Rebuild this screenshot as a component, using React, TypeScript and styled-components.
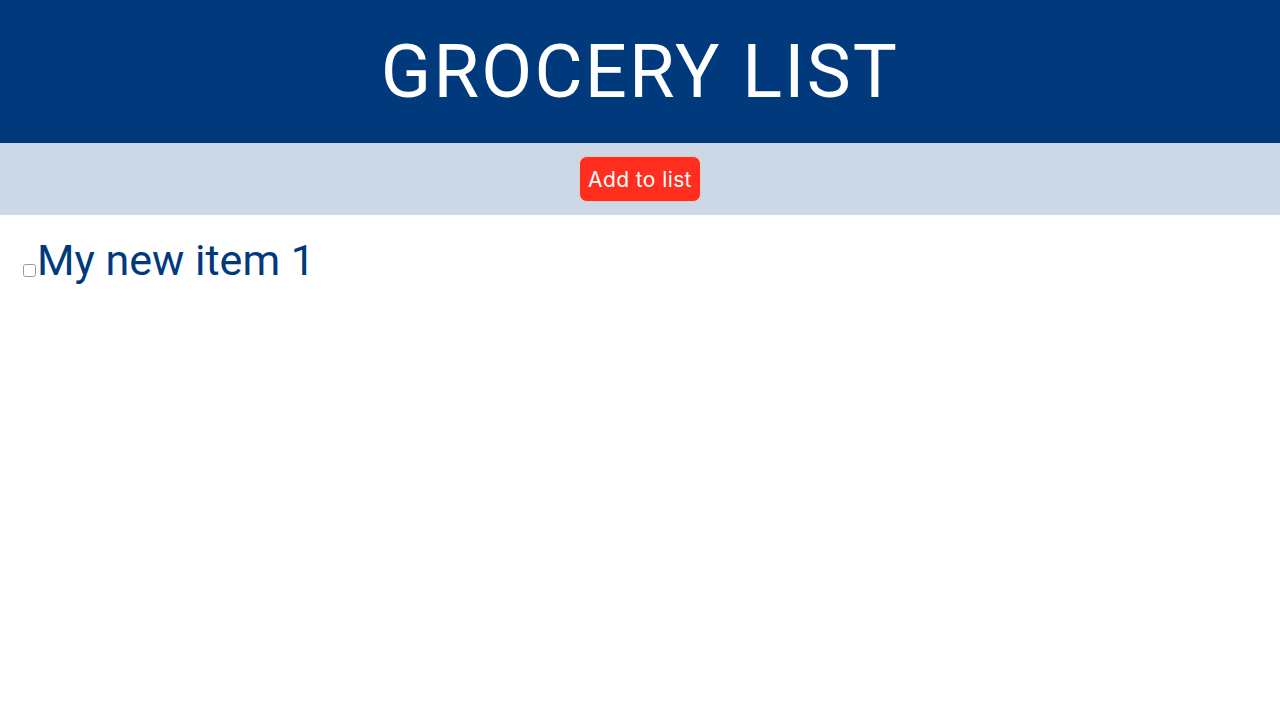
import React from "react";
import styled, { createGlobalStyle } from "styled-components";

const Global = createGlobalStyle`
  html, body { margin: 0; padding: 0; background: #ffffff; }
  body { font-family: Roboto, "Noto Sans", sans-serif; }
`;

const Header = styled.header`
  background: #003a7d;
  height: 143px;
  display: flex;
  align-items: center;
  justify-content: center;
`;

const Title = styled.h1`
  margin: 0;
  color: #ffffff;
  font-family: Roboto, sans-serif;
  font-weight: 400;
  font-size: 74px;
  letter-spacing: 2.2px;
  line-height: 1;
`;

const Toolbar = styled.div`
  background: #cdd8e6;
  height: 72px;
  display: flex;
  align-items: center;
  justify-content: center;
`;

const AddButton = styled.button`
  background: #ff2e1f;
  color: #ffffff;
  border: 1px solid #e6c8c4;
  border-radius: 8px;
  height: 46px;
  width: 122px;
  padding: 0;
  font-family: Inter, sans-serif;
  font-size: 21px;
  letter-spacing: 0.4px;
  cursor: pointer;
`;

const List = styled.ul`
  list-style: none;
  margin: 0;
  padding: 20px 19px;
`;

const Item = styled.li`
  display: flex;
  align-items: flex-end;
  color: #003a7d;
  font-family: Roboto, sans-serif;
  font-size: 43px;
  line-height: 50px;
`;

const Check = styled.input`
  margin: 0 1px 8px 4px;
  opacity: 0.75;
`;

export default function App() {
  return (
    <>
      <Global />
      <Header>
        <Title>GROCERY LIST</Title>
      </Header>
      <Toolbar>
        <AddButton>Add to list</AddButton>
      </Toolbar>
      <List>
        <Item>
          <Check type="checkbox" />
          <span>My new item 1</span>
        </Item>
      </List>
    </>
  );
}
